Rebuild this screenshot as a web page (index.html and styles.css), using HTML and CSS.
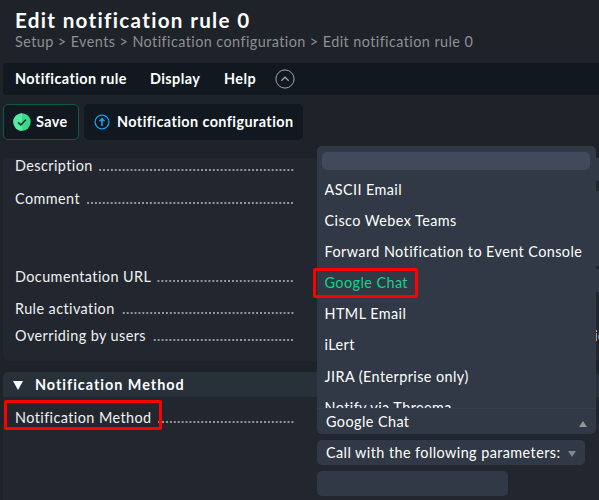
FILE: index.html
```html
<!DOCTYPE html>
<html lang="en">
<head>
    <meta charset="UTF-8">
    <meta name="viewport" content="width=device-width, initial-scale=1.0">
    <title>Edit notification rule 0</title>
    <link rel="stylesheet" href="styles.css">
</head>
<body>
    <header class="titlebar">
        <h1>Edit notification rule 0</h1>
        <div class="breadcrumb">Setup &gt; Events &gt; Notification configuration &gt; Edit notification rule 0</div>
    </header>

    <nav class="menubar">
        <span class="menu-rule">Notification rule</span>
        <span class="menu-display">Display</span>
        <span class="menu-help">Help</span>
        <svg class="toggle" width="20" height="20" viewBox="0 0 20 20" fill="none" stroke="#a3a6aa">
            <circle cx="10" cy="10" r="9.1"/>
            <path d="M6.3 11.8 L10 8.2 L13.7 11.8" stroke-width="1.2"/>
        </svg>
    </nav>

    <div class="actions">
        <div class="action save">
            <svg width="18" height="18" viewBox="0 0 18 18">
                <circle cx="9" cy="9" r="8.7" fill="#3bd98a"/>
                <path d="M9 .3 A8.7 8.7 0 0 0 9 17.7 Z" fill="#56eba0"/>
                <path d="M5.2 9.4 L7.9 12 L13 6.4" fill="none" stroke="#12261f" stroke-width="1.5"/>
            </svg>
            <span>Save</span>
        </div>
        <div class="action config">
            <svg width="16" height="16" viewBox="0 0 16 16" fill="none" stroke="#1f9cf0">
                <circle cx="8" cy="8" r="6.9" stroke-width="1.3"/>
                <path d="M8 12 V5 M5.5 7.2 L8 4.7 L10.5 7.2" stroke-width="1.6"/>
            </svg>
            <span>Notification configuration</span>
        </div>
    </div>

    <section class="panel properties">
        <div class="row description">
            <div class="label">Description<i class="dots"></i></div>
            <div class="field"></div>
        </div>
        <div class="row comment">
            <div class="label">Comment<i class="dots"></i></div>
            <div class="field"></div>
        </div>
        <div class="row url">
            <div class="label">Documentation URL<i class="dots"></i></div>
            <div class="field"></div>
        </div>
        <div class="row activation">
            <div class="label">Rule activation<i class="dots"></i></div>
        </div>
        <div class="row overriding">
            <div class="label">Overriding by users<i class="dots"></i></div>
            <div class="hint">ie</div>
        </div>
    </section>

    <section class="panel method">
        <h2><span class="arrow-down"></span>Notification Method</h2>
        <div class="row">
            <div class="label">Notification Method<i class="dots"></i></div>
            <div class="controls">
                <div class="select current">
                    <span>Google Chat</span>
                    <span class="arrow up"></span>
                    <div class="dropdown">
                        <div class="search"></div>
                        <ul>
                            <li>ASCII Email</li>
                            <li>Cisco Webex Teams</li>
                            <li>Forward Notification to Event Console</li>
                            <li class="selected">Google Chat</li>
                            <li>HTML Email</li>
                            <li>iLert</li>
                            <li>JIRA (Enterprise only)</li>
                            <li>Notify via Threema</li>
                        </ul>
                    </div>
                </div>
                <div class="select params">
                    <span>Call with the following parameters:</span>
                    <span class="arrow"></span>
                </div>
                <div class="text-input"></div>
            </div>
        </div>
    </section>

    <div class="marker marker-option"></div>
    <div class="marker marker-label"></div>
</body>
</html>
```

FILE: styles.css
```css
* {
    box-sizing: border-box;
}
body {
    margin: 0;
    width: 599px;
    height: 500px;
    overflow: hidden;
    position: relative;
    background-color: #1e2229;
    color: #fff;
    font-family: Lato, sans-serif;
    font-size: 14.4px;
    letter-spacing: 0.43px;
    line-height: 20px;
    white-space: nowrap;
}
h1, h2, ul {
    margin: 0;
    padding: 0;
}
.titlebar {
    height: 63px;
    padding: 8px 15px 0;
}
h1 {
    font-size: 20.6px;
    line-height: 24px;
    letter-spacing: 1.32px;
}
.breadcrumb {
    color: #8e9093;
}
.menubar {
    display: flex;
    align-items: center;
    height: 32px;
    margin-left: 3px;
    padding-left: 12px;
    border-radius: 4px 0 0 4px;
    background-color: #11181f;
    font-weight: bold;
}
.menu-rule {
    width: 135px;
}
.menu-display {
    width: 74px;
}
.menu-help {
    width: 51px;
}
.actions {
    display: flex;
    gap: 5px;
    height: 54px;
    padding: 9px 0 9px 3px;
}
.action {
    display: flex;
    align-items: center;
    border-radius: 5px;
    background-color: #11181f;
    font-weight: bold;
}
.save {
    width: 76px;
    padding-left: 9px;
    gap: 5px;
    border: 1px solid #0e5a43;
}
.config {
    width: 219px;
    padding-left: 10px;
    gap: 7px;
}
.panel {
    margin-left: 3px;
    background-color: #22272f;
}
.properties {
    height: 203px;
    margin-top: 9px;
    border-radius: 0 0 5px 5px;
    overflow: hidden;
}
.row {
    display: flex;
    align-items: flex-start;
}
.label {
    display: flex;
    flex: none;
    width: 291px;
    margin-right: 23px;
    padding-left: 12px;
    line-height: 18px;
    color: #f0f1f2;
}
.properties .label {
    line-height: 16px;
}
.dots {
    flex: 1;
    height: 2px;
    margin: 11px 0 0 6px;
    background: radial-gradient(circle at center, #94979b 0.7px, transparent 1.2px) right center / 3.93px 2px repeat-x;
}
.field {
    width: 300px;
    height: 23px;
    background-color: #303945;
}
.description {
    height: 33px;
}
.comment {
    height: 78px;
}
.comment .field {
    height: 75px;
}
.url {
    height: 32px;
}
.url .field {
    height: 23px;
}
.activation {
    height: 27px;
}
.hint {
    margin-left: 277px;
    line-height: 16px;
}
.method {
    height: 128px;
    margin-top: 11px;
    border-radius: 5px 5px 0 0;
}
h2 {
    display: flex;
    align-items: center;
    height: 25px;
    padding-left: 10px;
    border-radius: 5px 5px 0 0;
    background-color: #28303a;
    font-size: 14.4px;
    letter-spacing: 1px;
}
.arrow-down {
    margin: 2px 12px 0 0;
    border: 5px solid transparent;
    border-top: 9px solid #fff;
    border-bottom: 0;
}
.method .label {
    padding-top: 12px;
}
.method .dots {
    margin-top: 12px;
}
.controls {
    display: flex;
    flex-direction: column;
    gap: 6px;
    padding-top: 12px;
}
.select {
    display: flex;
    align-items: center;
    justify-content: space-between;
    height: 25px;
    padding: 0 9px 0 9px;
    border-radius: 5px;
    background-color: #303945;
}
.current {
    position: relative;
    width: 279px;
    border-radius: 0 0 5px 5px;
}
.params {
    width: 268px;
}
.arrow {
    margin-top: 3px;
    border: 4px solid transparent;
    border-top: 6px solid #858585;
    border-bottom: 0;
}
.arrow.up {
    border-top: 0;
    border-bottom: 6px solid #959595;
    margin-top: 5px;
}
.text-input {
    width: 191px;
    height: 25px;
    border-radius: 5px;
    background-color: #303945;
}
.dropdown {
    position: absolute;
    left: 0;
    bottom: 25px;
    width: 279px;
    height: 263px;
    padding: 6px 6px 0 5px;
    overflow: hidden;
    border-radius: 5px 5px 0 0;
    border-bottom: 1px solid #36404b;
    background-color: #303945;
}
.search {
    height: 18px;
    margin-bottom: 4px;
    border-radius: 5px;
    background-color: #404a5b;
}
li {
    height: 31.1px;
    padding-left: 2.5px;
    line-height: 31px;
    list-style: none;
}
.selected {
    color: #15d18a;
}
/* red highlight frames */
.marker {
    position: absolute;
    border: 3px solid #f00;
    border-radius: 2px;
}
.marker-option {
    left: 313px;
    top: 268px;
    width: 105px;
    height: 30px;
}
.marker-label {
    left: 4px;
    top: 400px;
    width: 158px;
    height: 30px;
}
```
